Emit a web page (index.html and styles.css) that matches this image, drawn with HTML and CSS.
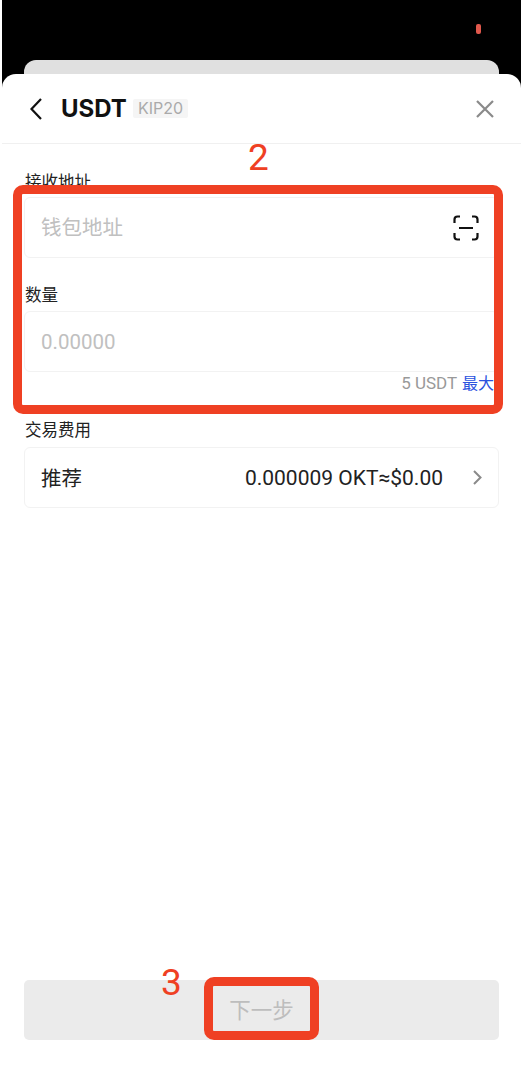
FILE: index.html
```html
<!DOCTYPE html>
<html lang="zh-CN">
<head>
    <meta charset="UTF-8">
    <meta name="viewport" content="width=device-width, initial-scale=1.0">
    <title>USDT KIP20</title>
    <link rel="stylesheet" href="styles.css">
</head>
<body>

    <div class="screen">
        <div class="status-bar"><span class="status-dot"></span></div>
        <div class="back-card"></div>

        <div class="sheet">
            <div class="sheet-header">
                <svg class="back-icon" width="12" height="22" viewBox="0 0 12 22"><path d="M11 1 L1.5 11 L11 21" fill="none" stroke="#111" stroke-width="2.2"/></svg>
                <span class="token">USDT</span>
                <span class="tag">KIP20</span>
                <svg class="close-icon" width="18" height="18" viewBox="0 0 18 18"><path d="M1 1 L17 17 M17 1 L1 17" fill="none" stroke="#8a8a8a" stroke-width="2.2"/></svg>
            </div>

            <div class="form">
                <div class="label first">接收地址</div>
                <div class="field">
                    <span class="placeholder cjk">钱包地址</span>
                    <svg class="scan-icon" width="26" height="26" viewBox="0 0 26 26"><path d="M1.5 8 V4.5 Q1.5 1.5 4.5 1.5 H7 M19 1.5 H21.5 Q24.5 1.5 24.5 4.5 V8 M1.5 18 V21.5 Q1.5 24.5 4.5 24.5 H7 M19 24.5 H21.5 Q24.5 24.5 24.5 21.5 V18 M6 13 H20" fill="none" stroke="#111" stroke-width="2.2"/></svg>
                </div>

                <div class="label amount">数量</div>
                <div class="field">
                    <span class="placeholder">0.00000</span>
                </div>
                <div class="balance">5 USDT <span class="max">最大</span></div>

                <div class="label fee">交易费用</div>
                <div class="field fee-row">
                    <span class="fee-name">推荐</span>
                    <span class="fee-value">0.000009 OKT≈$0.00</span>
                    <svg class="chevron" width="9" height="15" viewBox="0 0 9 15"><path d="M1 1 L7.5 7.5 L1 14" fill="none" stroke="#8a8a8a" stroke-width="2"/></svg>
                </div>
            </div>

            <div class="next-btn">下一步</div>
        </div>

        <!-- red annotations on top of the screenshot -->
        <div class="mark mark-form"></div>
        <div class="mark mark-btn"></div>
        <span class="step step-2">2</span>
        <span class="step step-3">3</span>
    </div>

</body>
</html>
```

FILE: styles.css
```css
* {
    box-sizing: border-box;
}

html, body {
    margin: 0;
    background: #fff;
}

body {
    width: 523px;
    height: 1070px;
    padding: 0 2px;
    overflow: hidden;
    font-family: Roboto, "Noto Sans CJK SC", sans-serif;
}

.screen {
    height: 1070px;
    background: #000;
    display: flex;
    flex-direction: column;
}

.status-bar {
    height: 60px;
    padding: 24px 40px 0 0;
    display: flex;
    justify-content: flex-end;
    align-items: flex-start;
}

.status-dot {
    width: 5px;
    height: 10px;
    border-radius: 2px;
    background: #e0584c;
}

.back-card {
    height: 14px;
    margin: 0 22px;
    background: #e0e0e0;
    border-radius: 12px 12px 0 0;
}

.sheet {
    flex: 1;
    background: #fff;
    border-radius: 14px 14px 0 0;
    display: flex;
    flex-direction: column;
}

.sheet-header {
    height: 70px;
    padding: 0 27px 0 28px;
    border-bottom: 1px solid #f0f0f0;
    display: flex;
    align-items: center;
}

.back-icon {
    margin-right: 19px;
}

.token {
    font-family: Inter, sans-serif;
    font-size: 24px;
    font-weight: 700;
    color: #111;
}

.tag {
    margin-left: 6px;
    padding: 0 5px;
    height: 19px;
    line-height: 19px;
    font-family: Inter, sans-serif;
    font-size: 16px;
    color: #aaa;
    background: #f5f5f5;
    border-radius: 2px;
}

.close-icon {
    margin-left: auto;
}

.form {
    padding: 0 22px;
}

.label {
    padding-left: 1px;
    font-size: 16.5px;
    line-height: 20px;
    color: #222;
}

.label.first {
    margin-top: 29px;
    margin-bottom: 4px;
}

.label.amount {
    margin-top: 28px;
    margin-bottom: 5px;
}

.label.fee {
    margin-top: 27px;
    margin-bottom: 6px;
}

.field {
    height: 61px;
    padding: 0 16px;
    border: 1px solid #f2f2f2;
    border-radius: 6px;
    display: flex;
    align-items: center;
    justify-content: space-between;
}

.placeholder {
    font-size: 20.5px;
    color: #c0c0c0;
}

.placeholder.cjk {
    margin-bottom: 3px;
}

.scan-icon {
    margin-right: 3px;
}

.balance {
    margin-top: 1px;
    padding-right: 5px;
    text-align: right;
    font-size: 17px;
    line-height: 20px;
    color: #999;
}

.max {
    margin-left: 1px;
    font-size: 16px;
    color: #2b52de;
}

.fee-row {
    color: #222;
    font-size: 20.5px;
}

.fee-name {
    margin-bottom: 2px;
}

.fee-value {
    margin-left: auto;
    font-size: 21px;
}

.chevron {
    margin-left: 30px;
}

.next-btn {
    height: 60px;
    padding-bottom: 3px;
    margin: auto 22px 30px;
    background: #ebebeb;
    border-radius: 5px;
    display: flex;
    align-items: center;
    justify-content: center;
    font-size: 21.5px;
    color: #bdbdbd;
}

.mark {
    position: absolute;
    border: 9px solid #ef4023;
    border-radius: 10px;
}

.mark-form {
    left: 13px;
    top: 185px;
    width: 490px;
    height: 229px;
}

.mark-btn {
    left: 204px;
    top: 977px;
    width: 115px;
    height: 63px;
}

.step {
    position: absolute;
    font-size: 37px;
    line-height: 37px;
    color: #ef4023;
}

.step-2 {
    left: 248px;
    top: 139px;
}

.step-3 {
    left: 161px;
    top: 964px;
}
```
